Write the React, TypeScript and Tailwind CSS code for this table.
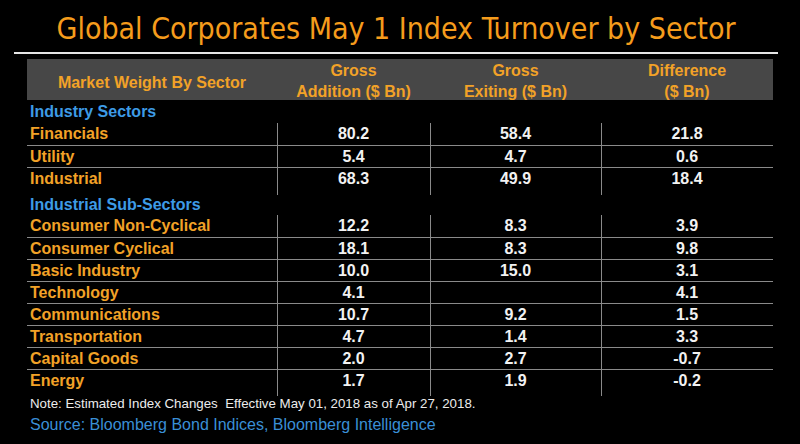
const ORANGE = "text-[#f2a227]";

type Row = { label: string; add: string; exit: string; diff: string };

const sectors: Row[] = [
  { label: "Financials", add: "80.2", exit: "58.4", diff: "21.8" },
  { label: "Utility", add: "5.4", exit: "4.7", diff: "0.6" },
  { label: "Industrial", add: "68.3", exit: "49.9", diff: "18.4" },
];

const subSectors: Row[] = [
  { label: "Consumer Non-Cyclical", add: "12.2", exit: "8.3", diff: "3.9" },
  { label: "Consumer Cyclical", add: "18.1", exit: "8.3", diff: "9.8" },
  { label: "Basic Industry", add: "10.0", exit: "15.0", diff: "3.1" },
  { label: "Technology", add: "4.1", exit: "", diff: "4.1" },
  { label: "Communications", add: "10.7", exit: "9.2", diff: "1.5" },
  { label: "Transportation", add: "4.7", exit: "1.4", diff: "3.3" },
  { label: "Capital Goods", add: "2.0", exit: "2.7", diff: "-0.7" },
  { label: "Energy", add: "1.7", exit: "1.9", diff: "-0.2" },
];

const grid = "grid grid-cols-[250px_153px_171px_172px]";

function DataRow({ row, first, tall }: { row: Row; first: boolean; tall?: boolean }) {
  return (
    <div
      className={`${grid} ${tall ? "h-[27px] pb-[4px]" : "h-[22px]"} ${
        first ? "" : "border-t-[1.5px] border-[#8a8a8a]"
      } text-[16px] font-bold leading-none`}
    >
      <div className={`flex items-center pl-[3px] ${ORANGE}`}>{row.label}</div>
      <div className="flex items-center justify-center text-[#f2f2f2] relative">
        <span className="absolute left-0 top-0 bottom-[-5px] w-px bg-[#8a8a8a]" />
        {row.add}
      </div>
      <div className="flex items-center justify-center text-[#f2f2f2] relative">
        <span className="absolute left-0 top-0 bottom-[-5px] w-px bg-[#8a8a8a]" />
        {row.exit}
      </div>
      <div className="flex items-center justify-center text-[#f2f2f2] relative">
        <span className="absolute left-0 top-0 bottom-[-5px] w-px bg-[#8a8a8a]" />
        {row.diff}
      </div>
    </div>
  );
}

function Heading({ text, h }: { text: string; h: string }) {
  return (
    <div className={`${h} flex items-center pl-[3px] text-[16px] font-bold leading-none text-[#3d9be6]`}>
      {text}
    </div>
  );
}

export default function App() {
  return (
    <div
      className="w-[800px] h-[444px] bg-black overflow-hidden"
      style={{ fontFamily: '"Liberation Sans", Arial, sans-serif' }}
    >
      {/* title */}
      <div className="h-[52px] flex justify-center items-start pt-[11px] pr-[8px]">
        <h1
          className="text-[30px] leading-[36px] text-[#f59c1c] font-normal tracking-[0px]"
          style={{ fontFamily: '"DejaVu Sans Condensed", "DejaVu Sans", sans-serif', fontStretch: "condensed" }}
        >
          Global Corporates May 1 Index Turnover by Sector
        </h1>
      </div>
      <div className="mx-[14px] w-[764px] h-[2px] bg-[#e6e6e6]" />

      <div className="ml-[27px] w-[746px] mt-[5px]">
        {/* header */}
        <div className={`${grid} h-[41px] bg-[#474747] text-[16px] font-bold leading-[21px] ${ORANGE}`}>
          <div className="flex items-center justify-center pt-[3px]">Market Weight By Sector</div>
          <div className="text-center pt-[1px]">
            Gross
            <br />
            Addition ($ Bn)
          </div>
          <div className="text-center pt-[1px]">
            Gross
            <br />
            Exiting ($ Bn)
          </div>
          <div className="text-center pt-[1px]">
            Difference
            <br />
            ($ Bn)
          </div>
        </div>

        <Heading text="Industry Sectors" h="h-[23px]" />
        {sectors.map((r, i) => (
          <DataRow key={r.label} row={r} first={i === 0} tall={i === sectors.length - 1} />
        ))}

        <Heading text="Industrial Sub-Sectors" h="h-[21px]" />
        {subSectors.map((r, i) => (
          <DataRow key={r.label} row={r} first={i === 0} />
        ))}
      </div>

      <div className="ml-[30px] mt-[2px]">
        <div className="h-[21px] flex items-center text-[13.3px] text-[#ececec]">
          Note: Estimated Index Changes&nbsp; Effective May 01, 2018 as of Apr 27, 2018.
        </div>
        <div className="h-[21px] flex items-center text-[16px] text-[#3a8fd6]">
          Source: Bloomberg Bond Indices, Bloomberg Intelligence
        </div>
      </div>
    </div>
  );
}
